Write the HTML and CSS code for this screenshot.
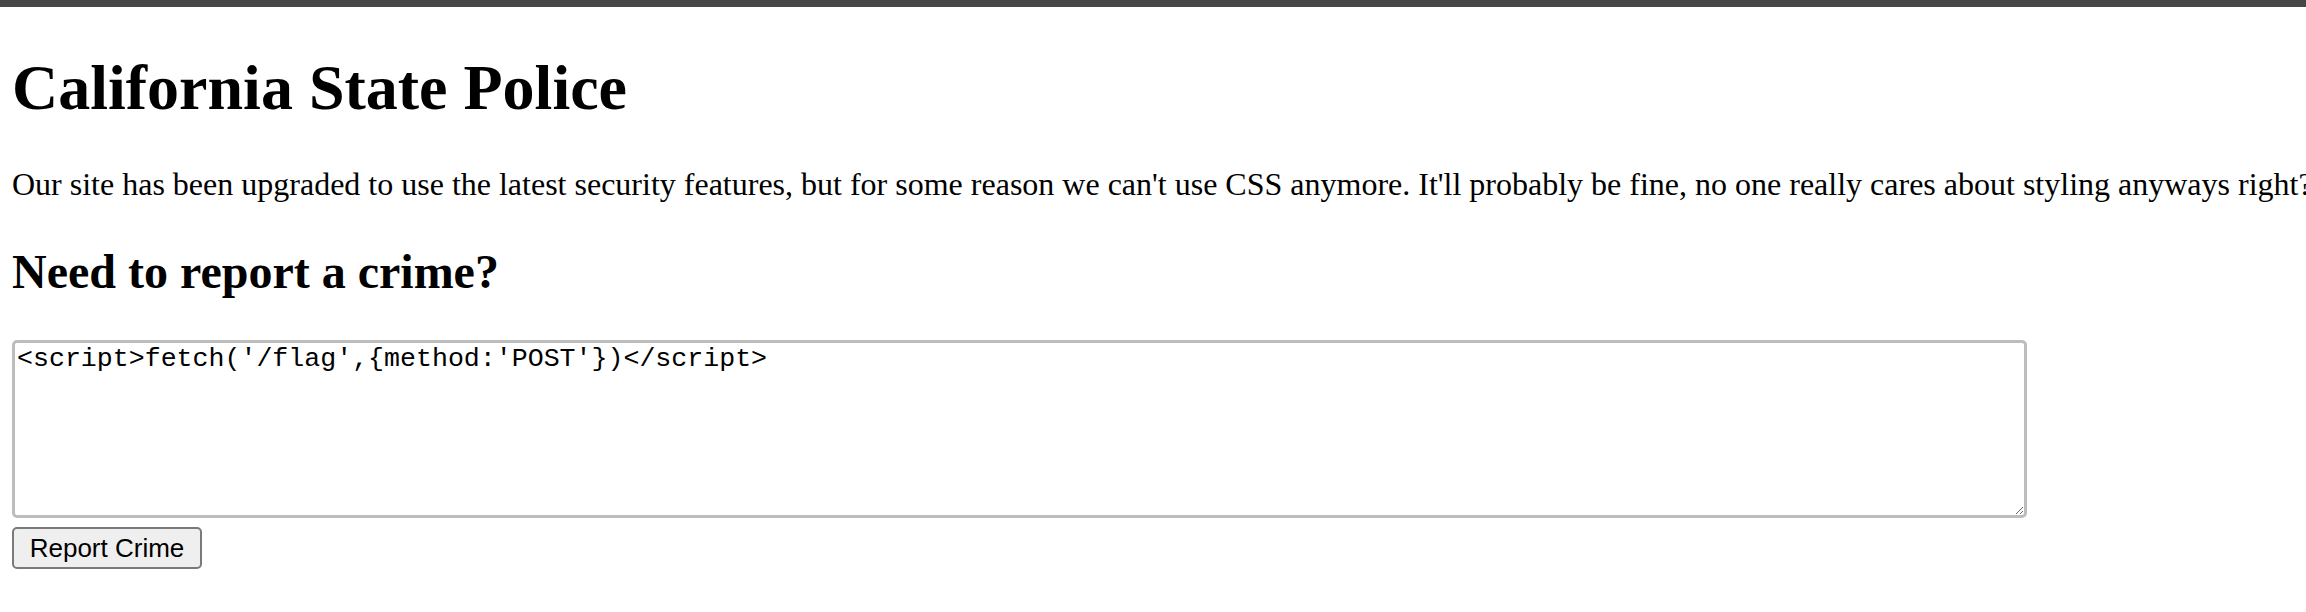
FILE: index.html
```html
<!DOCTYPE html>
<html lang="en">
<head>
<meta charset="utf-8">
<title>California State Police</title>
<link rel="stylesheet" href="styles.css">
</head>
<body>
<div class="topbar"></div>
<main class="page">
  <h1 class="title">California State Police</h1>
  <p class="intro">Our site has been upgraded to use the latest security features, but for some reason we can't use CSS anymore. It'll probably be fine, no one really cares about styling anyways right?</p>
  <h2 class="subtitle">Need to report a crime?</h2>
  <form class="report">
    <textarea class="report-input" name="crime">&lt;script&gt;fetch('/flag',{method:'POST'})&lt;/script&gt;</textarea>
    <button class="report-btn" type="button">Report Crime</button>
  </form>
</main>
</body>
</html>
```
FILE: styles.css
```css
html, body {
  margin: 0;
  padding: 0;
  background: #ffffff;
  overflow: hidden;
}
body {
  font-family: "Liberation Serif", "Times New Roman", serif;
  color: #000000;
}
.topbar {
  height: 7px;
  background: #474747;
}
.page {
  padding-left: 12px;
  display: flex;
  flex-direction: column;
  align-items: flex-start;
}
.title {
  margin: 45px 0 0;
  font-size: 64px;
  line-height: 72px;
  font-weight: bold;
  white-space: nowrap;
}
.intro {
  margin: 42px 0 0;
  font-size: 32px;
  line-height: 36px;
  white-space: nowrap;
}
.subtitle {
  margin: 43px 0 0;
  font-size: 48px;
  line-height: 54px;
  font-weight: bold;
  white-space: nowrap;
}
.report {
  margin: 41px 0 0;
  display: flex;
  flex-direction: column;
  align-items: flex-start;
  gap: 9px;
}
.report-input {
  box-sizing: border-box;
  width: 2015px;
  height: 178px;
  margin: 0;
  padding: 1px 2px 2px 2px;
  border: 3px solid #bdbdbd;
  border-radius: 5px;
  font-family: "Liberation Mono", "Courier New", monospace;
  font-size: 26.6px;
  color: #000000;
  background: #ffffff;
  outline: none;
}
.report-btn {
  box-sizing: border-box;
  width: 190px;
  height: 42px;
  margin: 0;
  padding: 0 6px;
  border: 2px solid #7a7a7a;
  border-radius: 5px;
  background: #efefef;
  font-family: "Liberation Sans", Arial, sans-serif;
  font-size: 26px;
  line-height: 1;
  white-space: nowrap;
  color: #000000;
}
```
